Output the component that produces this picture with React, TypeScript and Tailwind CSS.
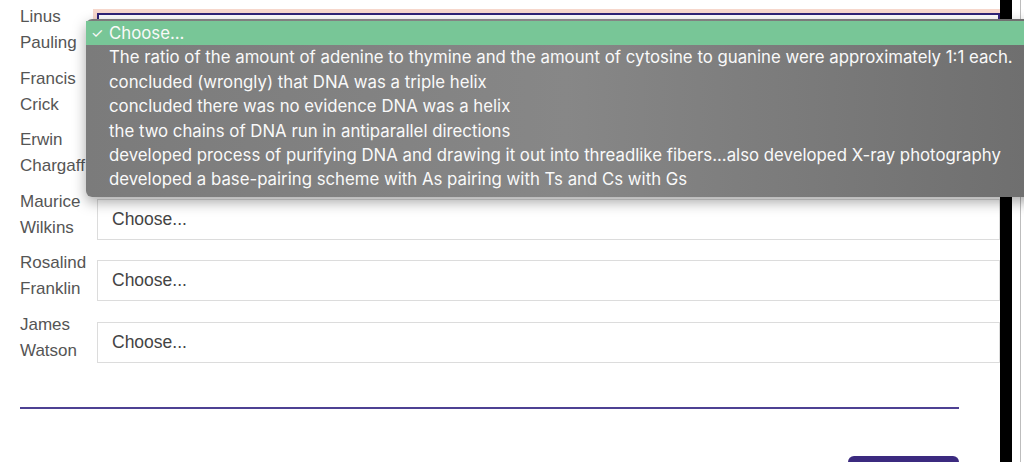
import { useState } from "react";

const scientists = [
  ["Linus", "Pauling"],
  ["Francis", "Crick"],
  ["Erwin", "Chargaff"],
  ["Maurice", "Wilkins"],
  ["Rosalind", "Franklin"],
  ["James", "Watson"],
];

const options = [
  "The ratio of the amount of adenine to thymine and the amount of cytosine to guanine were approximately 1:1 each.",
  "concluded (wrongly) that DNA was a triple helix",
  "concluded there was no evidence DNA was a helix",
  "the two chains of DNA run in antiparallel directions",
  "developed process of purifying DNA and drawing it out into threadlike fibers...also developed X-ray photography",
  "developed a base-pairing scheme with As pairing with Ts and Cs with Gs",
];

export default function App() {
  const [openRow] = useState(0);

  return (
    <div
      className="relative flex h-[462px] w-[1024px] overflow-hidden bg-white text-[#555]"
      style={{ fontFamily: '"Liberation Sans", Arial, sans-serif' }}
    >
      <div className="flex w-[1000px] shrink-0 flex-col pl-5 pt-1">
        {scientists.map(([first, last], index) => (
          <div key={last} className="mb-[9.5px] flex shrink-0 items-start">
            <div className="w-[77px] shrink-0 text-[17px] leading-[26px]">
              <div>{first}</div>
              <div className="whitespace-nowrap">{last}</div>
            </div>
            <div
              className={
                index === openRow
                  ? "mt-[9px] flex h-[42px] flex-1 items-center border-2 border-[#2f2377] pl-[13px] text-[17.5px] text-[#444] shadow-[0_0_0_4px_#f7d8cd]"
                  : "mt-[10px] flex h-[41px] flex-1 items-center border border-[#dcdcdc] pl-[14px] text-[17.5px] text-[#444]"
              }
            >
              Choose...
            </div>
          </div>
        ))}

        <div className="mt-[34px] h-[2px] w-[939px] shrink-0 bg-[#4e4193]" />
        <div className="mt-[47px] flex w-[939px] shrink-0 justify-end">
          <div className="h-[10px] w-[111px] rounded-t-[6px] bg-[#3b2a7f]" />
        </div>
      </div>

      <div className="h-full w-3 shrink-0 bg-black" />
      <div className="h-full w-2 shrink-0 bg-white" />
      <div className="h-full w-px shrink-0 bg-[#bdbdbd]" />

      {/* native select popup */}
      <div
        className="absolute left-[86px] top-[19px] w-[960px] rounded-[6px] bg-linear-to-r from-[#7b7b7b] via-[#878787] to-[#6e6e6e] pb-[5px] pt-[2px] text-[16.8px] leading-[24.4px] text-[#f9f9f9] shadow-[0_5px_14px_rgba(0,0,0,0.35)]"
        style={{ fontFamily: "Inter, 'Liberation Sans', sans-serif" }}
      >
        <div className="flex items-center bg-[#78c697]">
          <span className="w-[23px] pl-[5px] text-[14px]">✓</span>
          <span>Choose...</span>
        </div>
        {options.map((option) => (
          <div key={option} className="whitespace-nowrap pl-[23px]">
            {option}
          </div>
        ))}
      </div>
    </div>
  );
}
